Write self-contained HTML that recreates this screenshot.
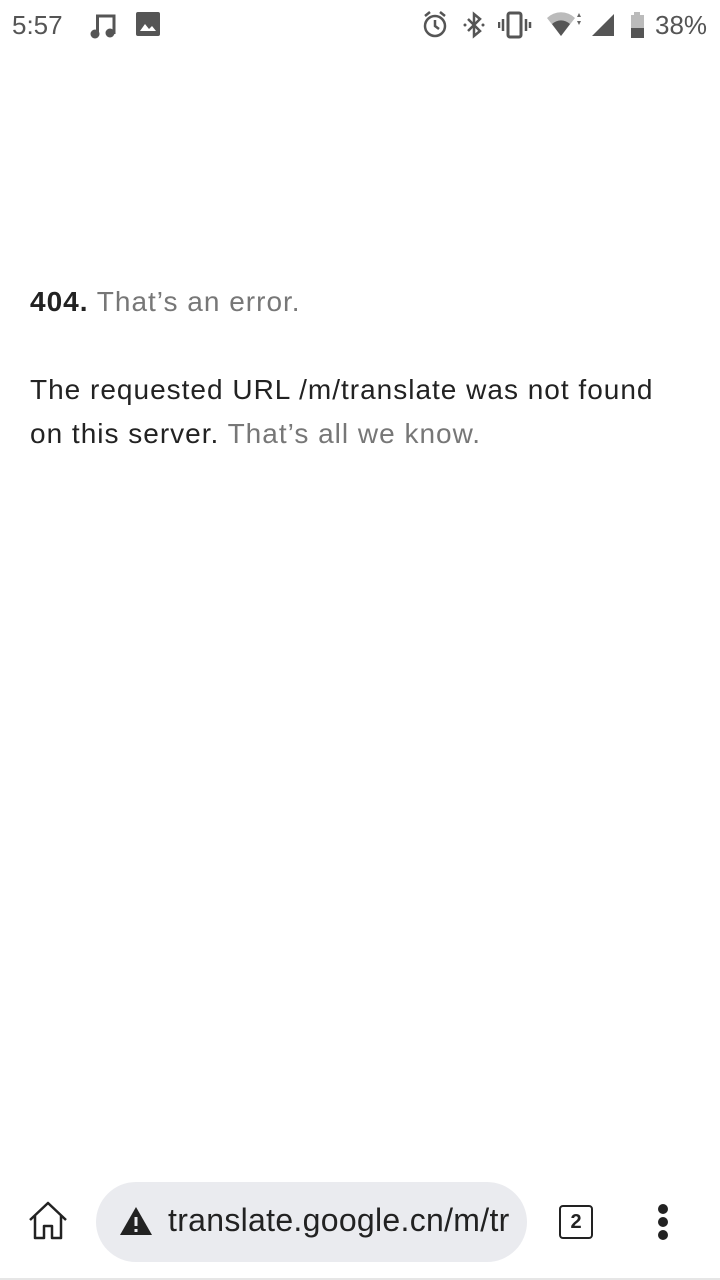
<!DOCTYPE html>
<html><head><meta charset="utf-8"><style>
html,body{margin:0;padding:0;width:720px;height:1280px;background:#fff;overflow:hidden;font-family:"Liberation Sans",sans-serif;position:relative}
.sb{position:absolute;top:0;left:0;width:720px;height:50px;color:#555}
.t{position:absolute;font-size:26px;top:10px}
.main{position:absolute;left:30px;top:280px;font-size:28px;color:#222;letter-spacing:1px;line-height:44px;white-space:nowrap}
.g{color:#777}
.bar{position:absolute;left:0;top:1170px;width:720px;height:110px;background:#fff;border-bottom:2px solid #e6e6e6;box-sizing:border-box}
.pill{position:absolute;left:96px;top:12px;width:431px;height:80px;border-radius:40px;background:#eaebef}
.url{position:absolute;left:72px;top:20px;font-size:32px;color:#222;letter-spacing:0.3px;white-space:nowrap;width:345px;overflow:hidden}
</style></head><body>
<div class="sb">
<div class="t" style="left:12px">5:57</div>
<svg style="position:absolute;left:88px;top:10px" width="30" height="30" viewBox="0 0 30 30"><path d="M8 6h18v18" stroke="#555" stroke-width="3" fill="none"/><circle cx="7" cy="24" r="4.5" fill="#555"/><circle cx="22" cy="23" r="4.5" fill="#555"/><path d="M9.5 6v18" stroke="#555" stroke-width="3"/></svg>
<svg style="position:absolute;left:136px;top:12px" width="24" height="24" viewBox="0 0 24 24"><rect x="0" y="0" width="24" height="24" rx="2" fill="#555"/><path d="M4 19l5-7 4 5 3-3 4 5z" fill="#fff"/></svg>
<svg style="position:absolute;left:422px;top:10px" width="28" height="30" viewBox="0 0 28 30"><circle cx="13" cy="16" r="10" stroke="#555" stroke-width="2.5" fill="none"/><path d="M13 10v6l4 3M3 6l5-4M23 6l-5-4" stroke="#555" stroke-width="2.5" fill="none"/></svg>
<svg style="position:absolute;left:462px;top:10px" width="24" height="30" viewBox="0 0 24 30"><path d="M6 9l12 12-6 5V4l6 5L6 21" stroke="#555" stroke-width="2.5" fill="none"/><circle cx="3" cy="15" r="1.5" fill="#555"/><circle cx="21" cy="15" r="1.5" fill="#555"/></svg>
<svg style="position:absolute;left:498px;top:10px" width="34" height="30" viewBox="0 0 34 30"><rect x="10" y="3" width="13" height="24" rx="2" stroke="#555" stroke-width="3" fill="none"/><path d="M5 9v12M1 12v6M28 9v12M32 12v6" stroke="#555" stroke-width="2.5"/></svg>
<svg style="position:absolute;left:546px;top:10px" width="36" height="30" viewBox="0 0 36 30"><path d="M1 8a20 20 0 0 1 28 0L15 26z" fill="#bbb"/><path d="M6 14a13 13 0 0 1 18 0L15 26z" fill="#555"/><path d="M33 3l-2 4h4zM33 15l-2-4h4z" fill="#666"/></svg>
<svg style="position:absolute;left:590px;top:12px" width="26" height="26" viewBox="0 0 26 26"><path d="M2 24L24 2v22z" fill="#555"/></svg>
<svg style="position:absolute;left:628px;top:10px" width="20" height="30" viewBox="0 0 20 30"><rect x="6" y="2" width="6" height="4" fill="#bbb"/><rect x="3" y="5" width="13" height="23" fill="#bbb"/><rect x="3" y="18" width="13" height="10" fill="#555"/></svg>
<div class="t" style="left:655px">38%</div>
</div>
<div class="main"><b>404.</b> <span class="g">That’s an error.</span><br><br>The requested URL /m/translate was not found<br>on this server. <span class="g">That’s all we know.</span></div>
<div class="bar">
<svg style="position:absolute;left:27px;top:30px" width="42" height="42" viewBox="0 0 42 42"><path d="M3 20L21 3l18 17M8 16v22h9V26h8v12h9V16" stroke="#222" stroke-width="2.5" fill="none" stroke-linejoin="round"/></svg>
<div class="pill">
<svg style="position:absolute;left:23px;top:24px" width="34" height="30" viewBox="0 0 34 30"><path d="M17 1L33 29H1z" fill="#222"/><path d="M17 11v9M17 23v3" stroke="#eaebef" stroke-width="3"/></svg>
<div class="url">translate.google.cn/m/tr</div>
</div>
<div style="position:absolute;left:559px;top:35px;width:30px;height:30px;border:2.5px solid #222;border-radius:4px;font-size:20px;font-weight:bold;text-align:center;line-height:30px;color:#222">2</div>
<div style="position:absolute;left:658px;top:34px;width:10px;height:10px;border-radius:5px;background:#222"></div>
<div style="position:absolute;left:658px;top:47px;width:10px;height:10px;border-radius:5px;background:#222"></div>
<div style="position:absolute;left:658px;top:60px;width:10px;height:10px;border-radius:5px;background:#222"></div>
</div>
</body></html>
